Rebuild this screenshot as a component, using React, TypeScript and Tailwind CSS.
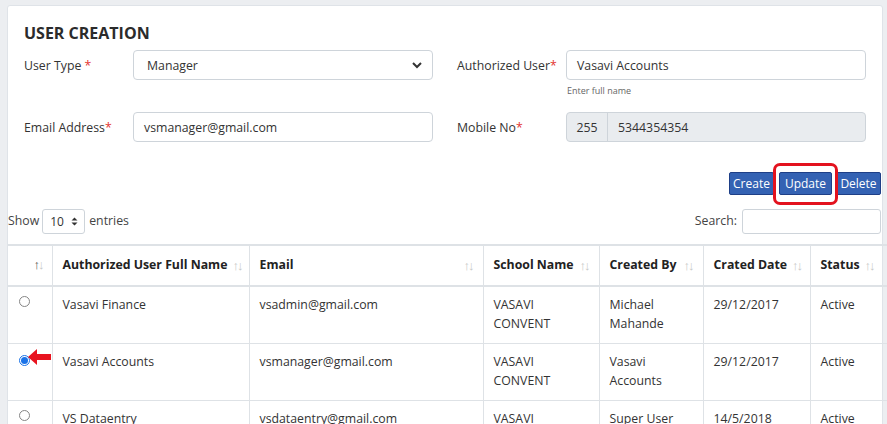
import React from 'react';

const font = { fontFamily: '"Open Sans", "Noto Sans", sans-serif' };

const rows = [
  { name: 'Vasavi Finance', email: 'vsadmin@gmail.com', school: ['VASAVI', 'CONVENT'], by: ['Michael', 'Mahande'], date: '29/12/2017', status: 'Active', checked: false },
  { name: 'Vasavi Accounts', email: 'vsmanager@gmail.com', school: ['VASAVI', 'CONVENT'], by: ['Vasavi', 'Accounts'], date: '29/12/2017', status: 'Active', checked: true },
  { name: 'VS Dataentry', email: 'vsdataentry@gmail.com', school: ['VASAVI', 'CONVENT'], by: ['Super User'], date: '14/5/2018', status: 'Active', checked: false },
];

const SortIcon = ({ first }: { first?: boolean }) => (
  <span className="ml-[5px] shrink-0 text-[13px] font-normal leading-none tracking-[-2px]">
    <span className={first ? 'text-[#555]' : 'text-[#c8c8c8]'}>↑</span>
    <span className="text-[#c8c8c8]">↓</span>
  </span>
);

const Req = () => <span className="text-[#e3342f]">*</span>;

const Radio = ({ checked }: { checked: boolean }) =>
  checked ? (
    <span className="inline-flex h-[11px] w-[11px] items-center justify-center rounded-full border border-[#1a73e8] bg-white">
      <span className="h-[7px] w-[7px] rounded-full bg-[#1a73e8]" />
    </span>
  ) : (
    <span className="inline-block h-[11px] w-[11px] rounded-full border border-[#858585] bg-white" />
  );

export default function App() {
  return (
    <div className="h-[424px] w-[887px] overflow-hidden bg-[#eceef1] pl-[7px] pt-[5px] text-[12.3px] text-[#333]" style={font}>
      <div className="relative w-[876px] rounded-t-[3px] border border-[#dfe3e8] bg-white pb-[40px]">
        <div className="px-[16px] pt-[16px]">
          <h1 className="text-[16px] font-bold leading-[22px] text-[#2b2b2b]">USER CREATION</h1>
          <div className="mt-[6px] flex">
            <label className="w-[109px] pt-[7px]">User Type <Req /></label>
            <div className="flex h-[30px] w-[300px] items-center justify-between rounded-[4px] border border-[#ced4da] pl-[13px] pr-[9px] pt-[3px]">
              <span>Manager</span>
              <svg className="-mt-[3px]" width="12" height="12" viewBox="0 0 12 12"><path d="M2 4l4 4 4-4" fill="none" stroke="#333" strokeWidth="2" /></svg>
            </div>
            <label className="ml-[24px] w-[109px] pt-[7px]">Authorized User<Req /></label>
            <div>
              <div className="flex h-[30px] w-[300px] items-center rounded-[4px] border border-[#ced4da] px-[10px] pt-[3px]">Vasavi Accounts</div>
              <div className="mt-[5px] pl-[1px] text-[9px] leading-[12px] text-[#666]">Enter full name</div>
            </div>
          </div>
          <div className="mt-[15px] flex">
            <label className="w-[109px] pt-[7px]">Email Address<Req /></label>
            <div className="flex h-[30px] w-[300px] items-center rounded-[4px] border border-[#ced4da] px-[10px] pt-[3px]">vsmanager@gmail.com</div>
            <label className="ml-[24px] w-[109px] pt-[7px]">Mobile No<Req /></label>
            <div className="flex h-[30px] w-[300px] items-center rounded-[4px] border border-[#ced4da] bg-[#e9ecef]">
              <span className="flex h-full w-[41px] items-center justify-center border-r border-[#ced4da] pt-[3px]">255</span>
              <span className="pl-[10px] pt-[3px]">5344354354</span>
            </div>
          </div>
        </div>

        <div className="mt-[30px] flex justify-end gap-[4px] pr-[1px] text-[12px] text-white">
          <button className="h-[23px] w-[45px] rounded-[2px] border border-[#1e3f87] bg-[#3462b3]">Create</button>
          <div className="relative">
            <button className="ml-[1px] h-[23px] w-[53px] rounded-[2px] border border-[#1e3f87] bg-[#3462b3]">Update</button>
            <div className="absolute left-[-5px] top-[-9px] h-[42px] w-[65px] rounded-[7px] border-[3px] border-[#e3121e]" />
          </div>
          <button className="h-[23px] w-[45px] rounded-[2px] border border-[#1e3f87] bg-[#3462b3]">Delete</button>
        </div>

        <div className="mt-[14px] flex items-center justify-between pr-[1px]">
          <div className="flex items-center">
            <span className="text-[#444]">Show</span>
            <span className="ml-[3px] flex h-[25px] w-[43px] items-center rounded-[3px] border border-[#ced4da] pl-[7px] text-[12px]">
              10
              <svg className="ml-[7px]" width="7" height="9" viewBox="0 0 7 9"><path d="M0.5 3.5L3.5 0.5 6.5 3.5z M0.5 5.5L3.5 8.5 6.5 5.5z" fill="#333" /></svg>
            </span>
            <span className="ml-[4px] text-[#444]">entries</span>
          </div>
          <div className="flex items-center">
            <span className="mr-[5px] text-[#444]">Search:</span>
            <span className="h-[25px] w-[139px] rounded-[3px] border border-[#ced4da]" />
          </div>
        </div>

        <table className="mt-[10px] w-[900px] table-fixed border-collapse">
          <colgroup>
            <col className="w-[44px]" />
            <col className="w-[197px]" />
            <col className="w-[234px]" />
            <col className="w-[116px]" />
            <col className="w-[104px]" />
            <col className="w-[107px]" />
            <col className="w-[98px]" />
          </colgroup>
          <thead>
            <tr className="h-[41px] border-y-2 border-[#dee2e6] text-left font-bold text-[#222]">
              <th className="border-r border-[#dee2e6] pr-[9px] text-right"><SortIcon first /></th>
              {['Authorized User Full Name', 'Email', 'School Name', 'Created By', 'Crated Date', 'Status'].map((h, i) => (
                <th key={h} className="border-x border-[#dee2e6] px-[10px]">
                  <div className={`flex items-center whitespace-nowrap ${i === 0 || i === 5 ? '' : 'justify-between'}`}>
                    <span>{h}</span>
                    <SortIcon />
                  </div>
                </th>
              ))}
            </tr>
          </thead>
          <tbody>
            {rows.map((r, i) => (
              <tr key={i} className="h-[57px] border-b border-[#dee2e6] align-top leading-[19px]">
                <td className="relative border-r border-[#dee2e6] pl-[11px] pt-[6px]">
                  <Radio checked={r.checked} />
                  {r.checked && (
                    <svg className="absolute left-[20px] top-[5px]" width="23" height="16" viewBox="0 0 23 16">
                      <path d="M0 8L9 0V5H23V11H9V16Z" fill="#e8141f" />
                    </svg>
                  )}
                </td>
                <td className="border-x border-[#dee2e6] px-[10px] pt-[8px]">{r.name}</td>
                <td className="border-x border-[#dee2e6] px-[10px] pt-[8px]">{r.email}</td>
                <td className="border-x border-[#dee2e6] px-[10px] pt-[8px]">{r.school.map((s) => <div key={s}>{s}</div>)}</td>
                <td className="border-x border-[#dee2e6] px-[10px] pt-[8px]">{r.by.map((s) => <div key={s}>{s}</div>)}</td>
                <td className="border-x border-[#dee2e6] px-[10px] pt-[8px]">{r.date}</td>
                <td className="border-x border-[#dee2e6] px-[10px] pt-[8px]">{r.status}</td>
              </tr>
            ))}
          </tbody>
        </table>
      </div>
    </div>
  );
}
